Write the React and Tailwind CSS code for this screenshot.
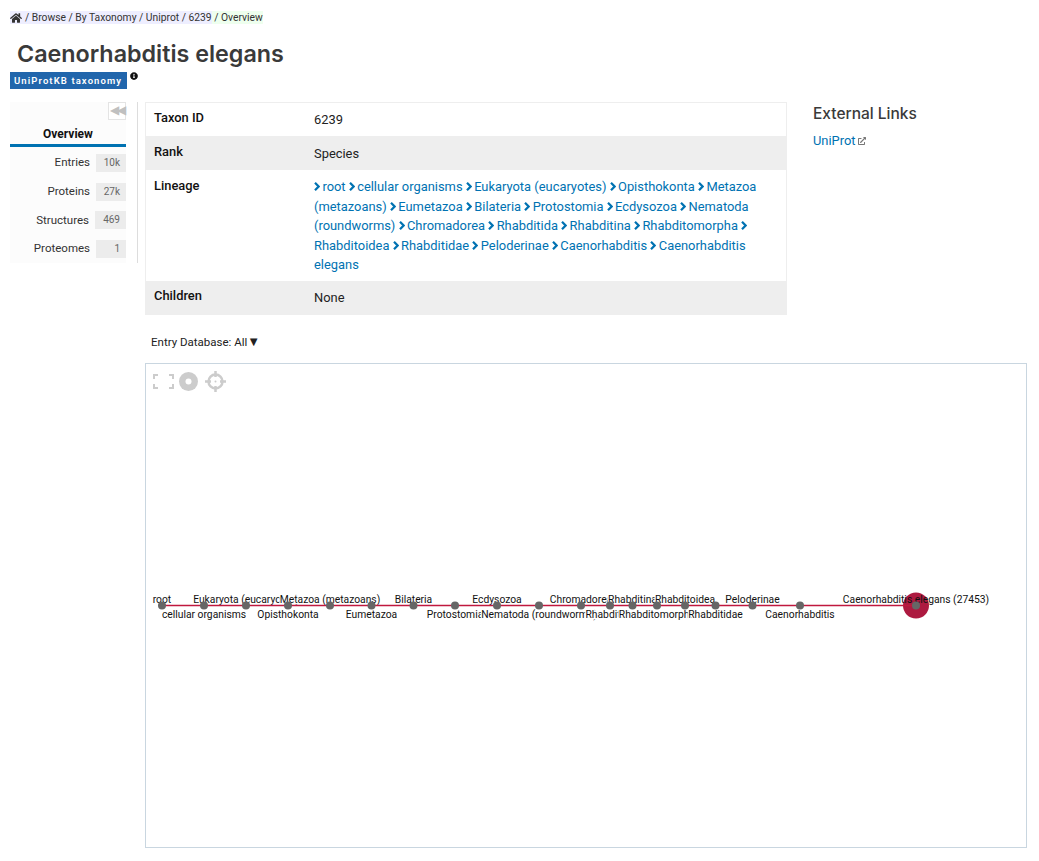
import React from "react";
import { FaHome, FaInfoCircle, FaExternalLinkAlt } from "react-icons/fa";

const lineage = ["root","cellular organisms","Eukaryota (eucaryotes)","Opisthokonta","Metazoa (metazoans)","Eumetazoa","Bilateria","Protostomia","Ecdysozoa","Nematoda (roundworms)","Chromadorea","Rhabditida","Rhabditina","Rhabditomorpha","Rhabditoidea","Rhabditidae","Peloderinae","Caenorhabditis","Caenorhabditis elegans"];
const xs = [162,204,246,288,330,371.5,413.5,455,497,539,581,610,632.5,657,685,715.5,752.5,800,916];
const nav = [["Entries","10k","w-[30px]"],["Proteins","27k","w-[30px]"],["Structures","469","w-[31px]"],["Proteomes","1","w-[30px]"]];

function Chart() {
  return (
    <svg className="absolute inset-0" width="880" height="483" viewBox="146 364 880 483">
      <circle cx="916" cy="605.5" r="13" fill="#ad1a40" />
      {lineage.map((n, i) => (
        <text key={n} x={xs[i]} y={i % 2 === 0 ? 603 : 618} textAnchor="middle" fontSize="10.3" fill="#111" stroke={i === 18 ? "none" : "#fff"} strokeWidth="2.5" style={{ paintOrder: "stroke" }}>
          {i === 18 ? "Caenorhabditis elegans (27453)" : n}
        </text>
      ))}
      <line x1="162" y1="605.5" x2="916" y2="605.5" stroke="#c0183f" strokeWidth="1.6" />
      {xs.map((x) => <circle key={x} cx={x} cy="605.5" r="4" fill="#666" />)}
    </svg>
  );
}

function Chev() {
  return (
    <svg className="inline-block align-baseline mr-[2.4px]" width="6" height="9" viewBox="0 0 6 9" fill="none" stroke="#0072b2" strokeWidth="2.2"><path d="M1 0.8 4.6 4.5 1 8.2" /></svg>
  );
}

export default function App() {
  return (
    <div className="font-['Roboto',sans-serif] text-[#222] pl-[10px] pr-3 min-h-[861px] bg-white">
      <div className="pt-[11px] h-[33px] flex text-[10.3px] leading-[13px] text-[#333]">
        <div className="bg-[#eeeeff] flex items-center h-[13px]"><FaHome className="text-[12px] text-[#333] mr-[3px]" /> <span>/ Browse / By Taxonomy / Uniprot / 6239</span></div>
        <div className="bg-[#eeffee] h-[13px] whitespace-pre"> / Overview</div>
      </div>
      <h1 className="font-['Inter',sans-serif] text-[23.3px] font-semibold leading-[30px] text-[#3a3a3a] pl-[7px] h-[34px] pt-[6px]">Caenorhabditis elegans</h1>
      <div className="flex items-start h-[30px] mt-[5px]">
        <span className="bg-[#2166ac] text-white text-[9.5px] font-semibold tracking-[1.1px] h-[17px] leading-[17px] px-[4px] w-[117px] whitespace-nowrap overflow-hidden">UniProtKB taxonomy</span>
        <FaInfoCircle className="text-[8px] text-[#111] ml-[3px] mt-0" />
      </div>
      <div className="flex">
        <div className="w-[128px] h-[161px] border-r border-[#ddd] shrink-0 mr-[7px]">
          <div className="w-[116px] bg-[#fcfcfc] h-full">
            <div className="flex justify-end"><div className="w-[18px] h-[18px] border border-[#e4e4e4] bg-white text-[#c0c0c0] text-[12px] leading-[14px] text-center tracking-[-2px]">◀◀</div></div>
            <div className="text-center font-bold text-[12px] leading-[14px] pt-[7px] pb-[3px] border-b-[3px] border-[#0072b2] text-[#111]">Overview</div>
            <div className="flex flex-col gap-[10.67px] pt-[7px]">
              {nav.map(([a, b, w]) => (
                <div key={a} className="flex items-center justify-end gap-[6px] h-[18px]">
                  <span className="text-[11.5px] text-[#333]">{a}</span>
                  <span className={`bg-[#ececec] ${w} h-[18px] leading-[18px] text-right pr-[6px] text-[10px] text-[#666]`}>{b}</span>
                </div>
              ))}
            </div>
          </div>
        </div>
        <div className="flex-1">
          <div className="flex">
            <div className="w-[642px] border border-[#eeeeee] text-[12.9px]">
              <div className="flex h-[33px]"><div className="w-[168px] pl-[8px] pt-[5px] font-medium text-[#111]">Taxon ID</div><div className="pt-[7px] text-[#222]">6239</div></div>
              <div className="flex h-[34px] bg-[#eeeeee]"><div className="w-[168px] pl-[8px] pt-[6px] font-medium text-[#111]">Rank</div><div className="pt-[8px]">Species</div></div>
              <div className="flex h-[111px]">
                <div className="w-[168px] pl-[8px] pt-[6px] font-medium text-[#111] shrink-0">Lineage</div>
                <div className="pt-[7px] pr-[20px] leading-[19.5px] text-[#0072b2] flex-1">
                  {lineage.map((n) => (
                    <React.Fragment key={n}><Chev />{n}{" "}</React.Fragment>
                  ))}
                </div>
              </div>
              <div className="flex h-[33px] bg-[#eeeeee]"><div className="w-[168px] pl-[8px] pt-[5px] font-medium text-[#111]">Children</div><div className="pt-[7px]">None</div></div>
            </div>
            <div className="pl-[26px]">
              <h2 className="font-['Inter',sans-serif] text-[15.5px] font-medium leading-[24px] text-[#3a3a3a]">External Links</h2>
              <div className="mt-[5px] text-[12.9px] text-[#0072b2] flex items-center">UniProt<FaExternalLinkAlt className="text-[8px] text-[#777] ml-[2px]" /></div>
            </div>
          </div>
          <div className="pl-[6px] pt-[20px] h-[48px] text-[11.5px] leading-[14px] text-[#222]">Entry Database: All<span className="text-[13px] leading-[14px]">▼</span></div>
          <div className="relative w-[882px] h-[485px] border border-[#c9d6e0]">
            <div className="absolute left-[7px] top-[7px] flex items-center gap-[5px] z-10">
              <svg width="21" height="15" viewBox="0 0 21 15" fill="none" stroke="#ccc" strokeWidth="2"><path d="M1 5V1h4M16 1h4v4M20 10v4h-4M5 14H1v-4" /></svg>
              <svg width="19" height="19" viewBox="0 0 19 19"><circle cx="9.5" cy="9.5" r="9.5" fill="#ccc" /><circle cx="9.5" cy="9.5" r="3" fill="#fff" /></svg>
              <svg width="21" height="21" viewBox="0 0 21 21" fill="none" stroke="#ccc" strokeWidth="2.5" className="ml-[2px]"><circle cx="10.5" cy="10.5" r="7" /><path d="M10.5 0v6M10.5 15v6M0 10.5h6M15 10.5h6" /><circle cx="10.5" cy="10.5" r="1" fill="#ccc" stroke="none" /></svg>
            </div>
            <Chart />
          </div>
        </div>
      </div>
    </div>
  );
}
